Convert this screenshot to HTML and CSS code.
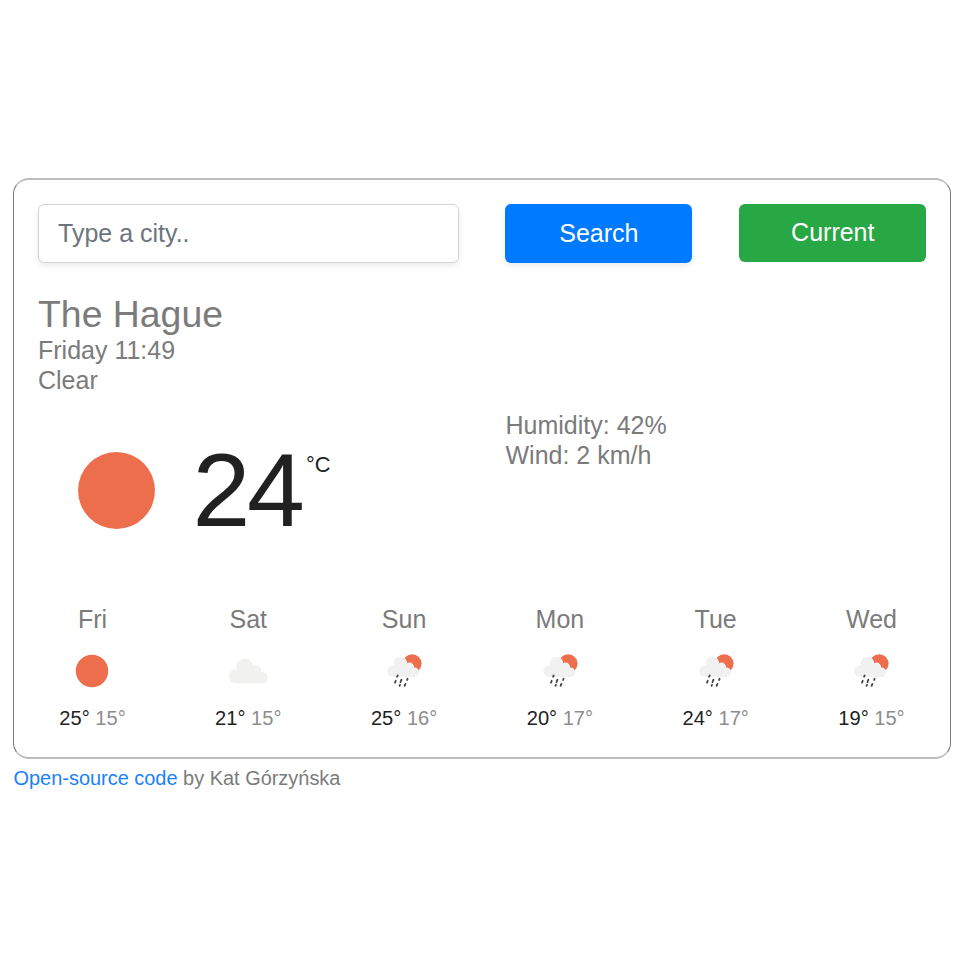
FILE: index.html
```
<!DOCTYPE html>
<html lang="en">
<head>
<meta charset="utf-8">
<title>Weather</title>
<link rel="stylesheet" href="styles.css">
</head>
<body>
<svg class="defs" width="0" height="0" aria-hidden="true">
  <symbol id="sun" viewBox="0 0 40 40"><circle cx="20" cy="20" r="16.2" fill="#ec6e4c"/></symbol>
  <symbol id="cloud" viewBox="0 0 40 40"><g fill="#f1f1f0"><circle cx="7.8" cy="25.3" r="7"/><circle cx="16.8" cy="15.8" r="8.2"/><circle cx="27.8" cy="19.6" r="5.4"/><circle cx="34" cy="26.6" r="5.7"/><path d="M7.8 20H28L34 24V32.3H7.8Z"/></g></symbol>
  <symbol id="rain" viewBox="0 0 40 40">
    <circle cx="28.2" cy="12.6" r="9.4" fill="#ec6e4c"/>
    <g fill="#f1f1f1"><circle cx="8.9" cy="20.3" r="5.7"/><circle cx="16.5" cy="12.5" r="6.8"/><circle cx="25.6" cy="16.1" r="4.5"/><circle cx="30.6" cy="21.3" r="4.7"/><path d="M8.9 16H26L30.6 19V26H8.9Z"/></g>
    <path d="M13.7 24.5l-.6 1.2M11.7 29.8l-.7 1.8M17.4 28.7l-.9 2.4M23.6 27.8l-.5 1.2M16 33.8l-.5 1M21.4 32.9l-.8 2" stroke="#444" stroke-width="1.8" stroke-linecap="round" fill="none"/>
  </symbol>
</svg>
<main class="card">
  <form class="search">
    <input class="city" type="text" placeholder="Type a city..">
    <button class="btn primary" type="button">Search</button>
    <button class="btn success" type="button">Current</button>
  </form>
  <h1>The Hague</h1>
  <div class="line">Friday 11:49</div>
  <div class="line">Clear</div>
  <section class="today">
    <div class="now">
      <svg class="big"><use href="#sun"/></svg>
      <span class="temp">24</span><span class="unit">°C</span>
    </div>
    <div class="details"><div class="line">Humidity: 42%</div><div class="line">Wind: 2 km/h</div></div>
  </section>
  <section class="forecast">
    <div class="day"><div class="name">Fri</div><svg><use href="#sun"/></svg><div class="range"><b>25°</b> 15°</div></div>
    <div class="day"><div class="name">Sat</div><svg><use href="#cloud"/></svg><div class="range"><b>21°</b> 15°</div></div>
    <div class="day"><div class="name">Sun</div><svg><use href="#rain"/></svg><div class="range"><b>25°</b> 16°</div></div>
    <div class="day"><div class="name">Mon</div><svg><use href="#rain"/></svg><div class="range"><b>20°</b> 17°</div></div>
    <div class="day"><div class="name">Tue</div><svg><use href="#rain"/></svg><div class="range"><b>24°</b> 17°</div></div>
    <div class="day"><div class="name">Wed</div><svg><use href="#rain"/></svg><div class="range"><b>19°</b> 15°</div></div>
  </section>
</main>
<footer><a href="#">Open-source code</a> by Kat Górzyńska</footer>
</body>
</html>
```
FILE: styles.css
```
* { box-sizing: border-box; }
body {
  margin: 0;
  padding: 178px 13px 0;
  background: #fff;
  color: #7b7b7b;
  font-family: "Liberation Sans", Arial, sans-serif;
  font-size: 25px;
}
.defs { position: absolute; }
.card {
  height: 581px;
  padding: 23.5px 24px 0;
  border: 1px solid #7b7b7b;
  border-width: 2px 1px;
  border-color: #bcbcbc #7b7b7b;
  border-radius: 16px;
}
.search {
  display: grid;
  grid-template-columns: 421px 187px 187px;
  column-gap: 46.4px;
  align-items: start;
  height: 59px;
}
.city, .btn {
  height: 59px;
  border-radius: 6px;
  font: inherit;
}
.city {
  width: 421px;
  padding: 0 19px;
  border: 1px solid #ced4da;
  background: #fff;
  box-shadow: 0 3px 6px rgba(0, 0, 0, .075);
}
.city::placeholder { color: #6c757d; opacity: 1; }
.btn { padding: 0; border: 0; color: #fff; }
.primary { background: #007bff; box-shadow: 0 3px 6px rgba(0, 0, 0, .075); }
.success { height: 58px; padding-left: 1px; background: #28a745; }
h1 {
  margin: 30.5px 0 0;
  font-size: 37.4px;
  font-weight: 400;
  line-height: 43px;
  height: 42px;
}
.line { line-height: 30px; }
.today {
  display: grid;
  grid-template-columns: 467.5px 1fr;
  height: 195px;
}
.now { display: flex; align-items: flex-start; padding: 48px 0 0 31px; }
.big { width: 95px; height: 95px; }
.temp {
  margin-left: 28.5px;
  color: #212121;
  font-size: 104px;
  line-height: 94px;
  letter-spacing: -3.3px;
}
.unit { margin: 9px 0 0 4.5px; color: #212121; font-size: 21.8px; line-height: 26px; }
.details { padding-top: 15px; }
.forecast { display: grid; grid-template-columns: repeat(6, 109px); column-gap: 46.8px; }
.day { display: flex; flex-direction: column; align-items: center; }
.name { line-height: 30px; margin-top: 14px; }
.day svg { width: 40px; height: 40px; margin: 17px .2px 0 0; }
.range { margin-top: 15px; font-size: 20.1px; line-height: 24px; color: #8d8d8d; }
.range b { color: #212121; font-weight: 400; }
footer { margin-top: 7px; padding-left: .5px; font-size: 19.95px; line-height: 24px; }
footer a { color: #1a7fff; text-decoration: none; }
```
